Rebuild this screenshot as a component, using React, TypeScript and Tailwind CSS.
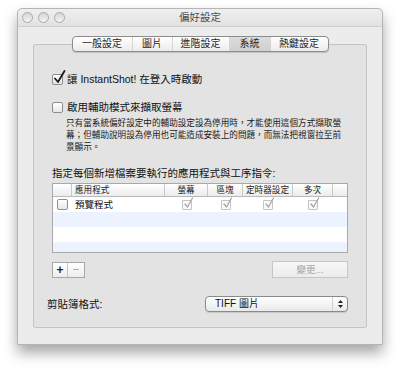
import React from "react";

const FONT = {
  fontFamily: '"Liberation Sans", "Noto Sans CJK TC", "Noto Sans CJK SC", sans-serif',
};

function CheckedBox() {
  return (
    <div className="relative w-[11px] h-[11px] shrink-0">
      <div className="w-[11px] h-[11px] rounded-[2px] border border-[#8e8e8e] bg-gradient-to-b from-[#ffffff] to-[#e6e6e6]" />
      <svg className="absolute left-[1px] top-[-4px]" width="13" height="14" viewBox="0 0 13 14">
        <path d="M2 8.5 L5 12 L11.5 1" fill="none" stroke="#1a1a1a" strokeWidth="1.8" strokeLinecap="round" strokeLinejoin="round" />
      </svg>
    </div>
  );
}

function EmptyBox() {
  return (
    <div className="w-[11px] h-[11px] shrink-0 rounded-[2px] border border-[#8e8e8e] bg-gradient-to-b from-[#ffffff] to-[#e8e8e8]" />
  );
}

function DisabledCheck() {
  return (
    <div className="relative w-[10px] h-[10px]">
      <div className="w-[10px] h-[10px] rounded-[1px] border border-[#c4c4c4] bg-[#fafafa]" />
      <svg className="absolute left-[1px] top-[-3px]" width="11" height="12" viewBox="0 0 11 12">
        <path d="M2 7 L4.5 10 L9.5 1" fill="none" stroke="#a8a8a8" strokeWidth="1.3" strokeLinecap="round" strokeLinejoin="round" />
      </svg>
    </div>
  );
}

function Light() {
  return (
    <div className="w-[11px] h-[11px] rounded-full border border-[#a9a9a9] bg-gradient-to-b from-[#d6d6d6] to-[#f4f4f4]" />
  );
}

const tabs = [
  { label: "一般設定", w: "w-[59px]" },
  { label: "圖片", w: "w-[40px]" },
  { label: "進階設定", w: "w-[57px]" },
  { label: "系統", w: "w-[41px]", selected: true },
  { label: "熱鍵設定", w: "w-[58px]" },
];

export default function App() {
  return (
    <div className="w-[400px] h-[370px] bg-white" style={FONT}>
      <div className="pt-[8px] pl-[17px]">
        <div className="w-[366px] h-[337px] bg-[#ececec] rounded-t-[5px] border border-[#b5b5b5] shadow-[0_8px_14px_rgba(0,0,0,0.35)] flex flex-col">
          {/* Title bar */}
          <div className="relative h-[18px] rounded-t-[5px] bg-gradient-to-b from-[#efefef] to-[#e2e2e2] border-b border-[#cfcfcf] flex items-center">
            <div className="flex gap-[5px] pl-[4px]">
              <Light />
              <Light />
              <Light />
            </div>
            <div className="absolute inset-0 flex items-center justify-center text-[10.5px] text-[#4a4a4a]">
              偏好設定
            </div>
          </div>

          {/* Tabs */}
          <div className="mt-[9px] flex justify-center relative z-10">
            <div className="flex h-[16px] rounded-[4px] border border-[#8c8c8c] bg-gradient-to-b from-[#ffffff] to-[#ececec] overflow-hidden shadow-[0_1px_1px_rgba(0,0,0,0.15)]">
              {tabs.map((t, i) => (
                <div
                  key={t.label}
                  className={
                    t.w +
                    " flex items-center justify-center text-[10px] text-[#1f1f1f] leading-none " +
                    (i > 0 ? "border-l border-[#d4d4d4] " : "") +
                    (t.selected ? "bg-gradient-to-b from-[#dcdcdc] to-[#d0d0d0]" : "")
                  }
                >
                  {t.label}
                </div>
              ))}
            </div>
          </div>

          {/* Panel */}
          <div className="mx-[15px] mt-[-8px] h-[284px] border border-[#c4c4c4] rounded-[2px] bg-[#e3e3e3] px-[18px] pt-[27px]">
            <div className="flex items-center h-[14px] gap-[4px]">
              <CheckedBox />
              <span className="text-[10.5px] text-[#111] leading-none">讓 InstantShot! 在登入時啟動</span>
            </div>

            <div className="flex items-center h-[14px] gap-[4px] mt-[14px]">
              <EmptyBox />
              <span className="text-[10.5px] text-[#111] leading-none">啟用輔助模式來擷取螢幕</span>
            </div>
            <div className="mt-[3px] pl-[14px] text-[8.6px] leading-[12px] text-[#1a1a1a] whitespace-nowrap">
              <div>只有當系統偏好設定中的輔助設定設為停用時，才能使用這個方式擷取螢</div>
              <div>幕；但輔助說明設為停用也可能造成安裝上的問題，而無法把視窗拉至前</div>
              <div>景顯示。</div>
            </div>

            <div className="mt-[13px] h-[14px] flex items-center text-[10.5px] text-[#111] leading-none">
              指定每個新增檔案要執行的應用程式與工序指令:
            </div>

            {/* Table */}
            <div className="mt-[3px] h-[70px] border border-[#a9a9a9] bg-white flex flex-col overflow-hidden">
              <div className="h-[13px] shrink-0 flex border-b border-[#b9b9b9] bg-gradient-to-b from-[#ffffff] to-[#ececec] text-[8.6px] text-[#222] leading-none">
                <div className="w-[19px] border-r border-[#c8c8c8]" />
                <div className="w-[93px] border-r border-[#c8c8c8] flex items-center pl-[3px]">應用程式</div>
                <div className="w-[43px] border-r border-[#c8c8c8] flex items-center justify-center">螢幕</div>
                <div className="w-[35px] border-r border-[#c8c8c8] flex items-center justify-center">區塊</div>
                <div className="w-[50px] border-r border-[#c8c8c8] flex items-center justify-center">定時器設定</div>
                <div className="w-[40px] border-r border-[#c8c8c8] flex items-center justify-center">多次</div>
                <div className="flex-1" />
              </div>
              <div className="h-[15px] shrink-0 flex items-center bg-white">
                <div className="w-[19px] flex justify-center">
                  <EmptyBox />
                </div>
                <div className="w-[93px] pl-[3px] text-[9.5px] text-[#111] leading-none">預覽程式</div>
                <div className="w-[43px] flex justify-center"><DisabledCheck /></div>
                <div className="w-[35px] flex justify-center"><DisabledCheck /></div>
                <div className="w-[50px] flex justify-center"><DisabledCheck /></div>
                <div className="w-[40px] flex justify-center"><DisabledCheck /></div>
              </div>
              <div className="h-[15px] shrink-0 bg-[#edf3fe]" />
              <div className="h-[15px] shrink-0 bg-white" />
              <div className="flex-1 bg-[#edf3fe]" />
            </div>

            {/* Buttons */}
            <div className="mt-[8px] flex items-center justify-between">
              <div className="flex h-[16px] border border-[#a8a8a8] bg-gradient-to-b from-[#ffffff] to-[#ededed]">
                <div className="w-[15px] flex items-center justify-center text-[12px] font-bold text-[#222] leading-none border-r border-[#c4c4c4]">+</div>
                <div className="w-[16px] flex items-center justify-center text-[11px] text-[#9a9a9a] leading-none">−</div>
              </div>
              <div className="w-[76px] h-[17px] border border-[#c6c6c6] bg-gradient-to-b from-[#f7f7f7] to-[#ececec] flex items-center justify-center text-[9.5px] text-[#a6a6a6] leading-none">
                變更...
              </div>
            </div>

            {/* Clipboard format */}
            <div className="mt-[18px] flex items-center justify-between">
              <span className="pl-[-5px] ml-[-5px] text-[10.5px] text-[#111] leading-none">剪貼簿格式:</span>
              <div className="w-[143px] h-[16px] rounded-[4px] border border-[#8a8a8a] bg-gradient-to-b from-[#ffffff] to-[#e9e9e9] flex items-center shadow-[0_1px_1px_rgba(0,0,0,0.12)]">
                <span className="flex-1 pl-[9px] text-[10px] text-[#111] leading-none">TIFF 圖片</span>
                <div className="w-[15px] h-full border-l border-[#cfcfcf] flex flex-col items-center justify-center gap-[2px]">
                  <svg width="5" height="3" viewBox="0 0 5 3"><path d="M0 3 L2.5 0 L5 3 Z" fill="#222" /></svg>
                  <svg width="5" height="3" viewBox="0 0 5 3"><path d="M0 0 L2.5 3 L5 0 Z" fill="#222" /></svg>
                </div>
              </div>
            </div>
          </div>
        </div>
      </div>
    </div>
  );
}
